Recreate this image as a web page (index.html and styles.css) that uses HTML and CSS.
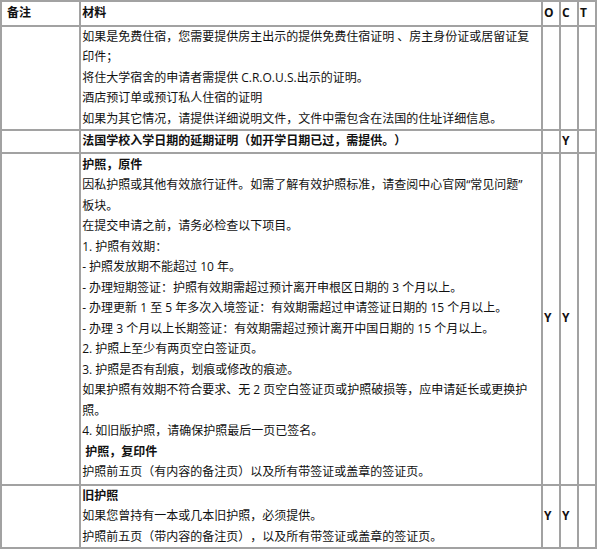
FILE: index.html
```html
<!DOCTYPE html>
<html lang="zh-CN">
<head>
<meta charset="utf-8">
<title>材料清单</title>
<link rel="stylesheet" href="styles.css">
</head>
<body>
<table class="docs">
  <thead>
    <tr>
      <th class="c-note">备注</th>
      <th class="c-mat">材料</th>
      <th class="c-flag">O</th>
      <th class="c-flag">C</th>
      <th class="c-flag c-last">T</th>
    </tr>
  </thead>
  <tbody>
    <tr>
      <td></td>
      <td>如果是免费住宿，您需要提供房主出示的提供免费住宿证明 、房主身份证或居留证复<br>印件；<br>将住大学宿舍的申请者需提供 C.R.O.U.S.出示的证明。<br>酒店预订单或预订私人住宿的证明<br>如果为其它情况，请提供详细说明文件，文件中需包含在法国的住址详细信息。</td>
      <td></td>
      <td></td>
      <td></td>
    </tr>
    <tr>
      <td></td>
      <td><b>法国学校入学日期的延期证明（如开学日期已过，需提供。）</b></td>
      <td></td>
      <td class="flag">Y</td>
      <td></td>
    </tr>
    <tr class="tall">
      <td></td>
      <td><b>护照，原件</b><br>因私护照或其他有效旅行证件。如需了解有效护照标准，请查阅中心官网“常见问题”<br>板块。<br>在提交申请之前，请务必检查以下项目。<br>1. 护照有效期：<br>- 护照发放期不能超过 10 年。<br>- 办理短期签证：护照有效期需超过预计离开申根区日期的 3 个月以上。<br>- 办理更新 1 至 5 年多次入境签证：有效期需超过申请签证日期的 15 个月以上。<br>- 办理 3 个月以上长期签证：有效期需超过预计离开中国日期的 15 个月以上。<br>2. 护照上至少有两页空白签证页。<br>3. 护照是否有刮痕，划痕或修改的痕迹。<br>如果护照有效期不符合要求、无 2 页空白签证页或护照破损等，应申请延长或更换护<br>照。<br>4. 如旧版护照，请确保护照最后一页已签名。<br>&nbsp;<b>护照，复印件</b><br>护照前五页（有内容的备注页）以及所有带签证或盖章的签证页。</td>
      <td class="flag">Y</td>
      <td class="flag">Y</td>
      <td></td>
    </tr>
    <tr>
      <td></td>
      <td><b>旧护照</b><br>如果您曾持有一本或几本旧护照，必须提供。<br>护照前五页（带内容的备注页），以及所有带签证或盖章的签证页。</td>
      <td class="flag">Y</td>
      <td class="flag">Y</td>
      <td></td>
    </tr>
  </tbody>
</table>
</body>
</html>
```

FILE: styles.css
```css
html, body {
  margin: 0;
  padding: 0;
  background: #ffffff;
}

body {
  font-family: "Open Sans", "Noto Sans CJK SC", sans-serif;
  font-size: 12px;
  color: #111111;
  text-spacing-trim: space-all;
}

.docs {
  width: 597px;
  table-layout: fixed;
  border-collapse: separate;
  border-spacing: 0;
  border: 1px solid #a2a2a2;
}

.docs th,
.docs td {
  box-sizing: border-box;
  border: 1px solid #a2a2a2;
  padding: 0 1px;
  line-height: 20.5px;
  text-align: left;
  vertical-align: middle;
}

.docs th {
  font-weight: bold;
  padding-top: 1px;
  padding-bottom: 1px;
}

.docs .tall td {
  padding-top: 1px;
  padding-bottom: 1px;
}

.docs b,
.docs .flag {
  font-weight: bold;
}

.c-note {
  width: 79px;
  padding-left: 5px !important;
}

.c-mat {
  width: 461px;
}

.c-flag {
  width: 18px;
}
```
